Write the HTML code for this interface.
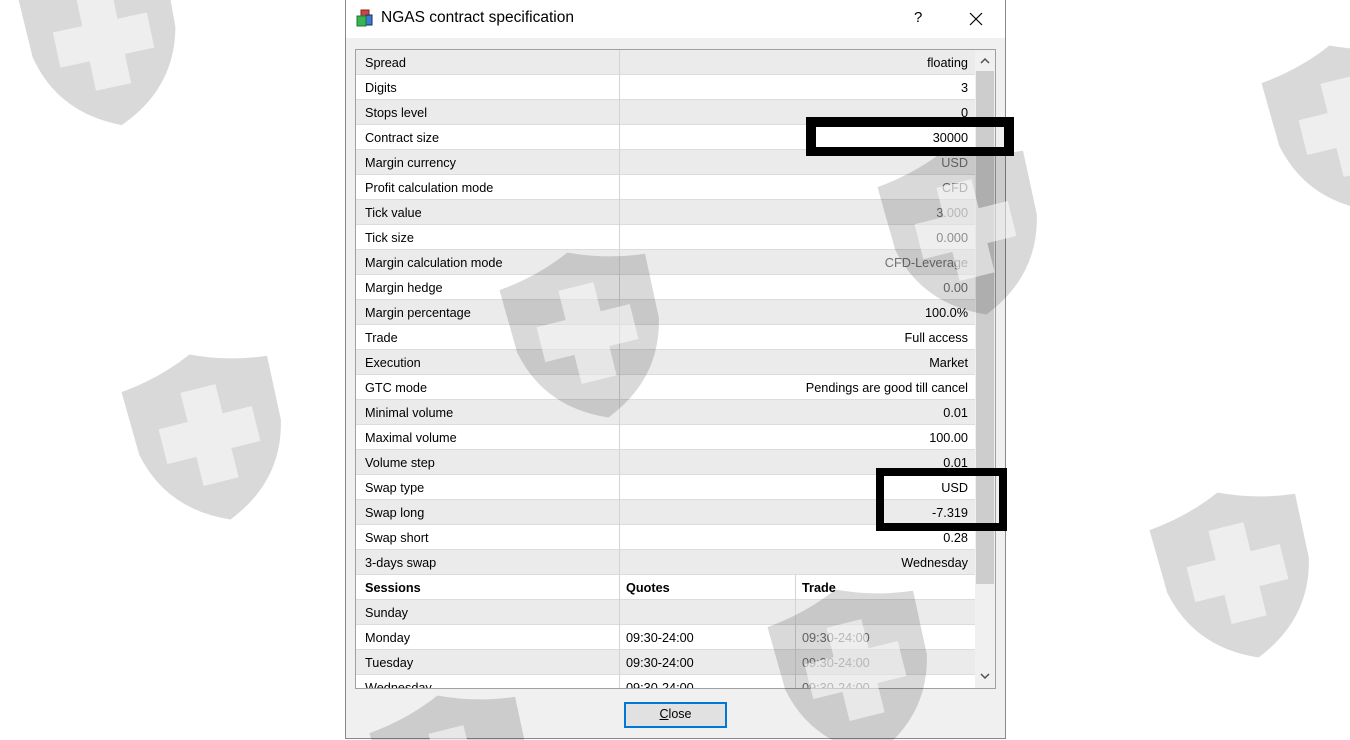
<!DOCTYPE html>
<html><head><meta charset="utf-8">
<style>
*{margin:0;padding:0;box-sizing:border-box}
html,body{width:1350px;height:740px;overflow:hidden}
body{background:#fff;position:relative;font-family:"Liberation Sans","DejaVu Sans",sans-serif;font-size:12.7px;color:#000}
#dlg{position:absolute;left:345px;top:0;width:661px;height:739px;background:#f0f0f0;border:1px solid #8a8a8a;border-top:none}
#title{position:absolute;left:0;top:0;width:659px;height:38px;background:#fff}
#title .t{position:absolute;left:35px;top:9px;font-size:15.5px;color:#000}
#title .q{position:absolute;left:568px;top:9px;font-size:15px}
#tbl{position:absolute;left:9px;top:49px;width:641px;height:640px;border:1px solid #a0a0a0;background:#fff;overflow:hidden}
.r{position:absolute;left:0;width:619px;height:25px;border-bottom:1px solid #dcdcdc}
.r.g{background:#ebebeb}
.r .l{position:absolute;left:9px;top:6px}
.r .v{position:absolute;right:7px;top:6px;text-align:right}
.r .c1{position:absolute;left:263px;top:0;width:1px;height:25px;background:#d4d4d4}
.r .c2{position:absolute;left:439px;top:0;width:1px;height:25px;background:#d4d4d4}
.gr{color:#707070}
.b{font-weight:bold}
#sb{position:absolute;left:619px;top:0;width:20px;height:638px;background:#f0f0f0}
#thumb{position:absolute;left:1px;top:21px;width:18px;height:513px;background:#cdcdcd}
.box{position:absolute;border:solid #000}
#btn{position:absolute;left:278px;top:702px;width:103px;height:26px;border:2px solid #0078d7;background:#e1e1e1;text-align:center;line-height:21px;font-size:12.5px}
#wm{position:absolute;left:0;top:0;display:block}
</style></head><body>
<div id="dlg">
 <div id="title">
  <svg style="position:absolute;left:10px;top:9px" width="18" height="18" viewBox="0 0 18 18">
   <rect x="5" y="1" width="8" height="6" fill="#c44" stroke="#822" stroke-width="1"/>
   <rect x="10" y="6" width="6" height="10" fill="#3a7bd5" stroke="#135" stroke-width="1"/>
   <rect x="1" y="7" width="9" height="10" fill="#3cb44b" stroke="#174" stroke-width="1"/>
  </svg>
  <div class="t">NGAS contract specification</div>
  <div class="q">?</div>
  <svg style="position:absolute;left:623px;top:12px" width="14" height="14" viewBox="0 0 14 14"><path d="M1 1L13 13M13 1L1 13" stroke="#000" stroke-width="1.2"/></svg>
 </div>
 <div id="tbl">
  <div class="r g" style="top:0"><span class="l">Spread</span><span class="c1"></span><span class="v">floating</span></div>
  <div class="r" style="top:25px"><span class="l">Digits</span><span class="c1"></span><span class="v">3</span></div>
  <div class="r g" style="top:50px"><span class="l">Stops level</span><span class="c1"></span><span class="v">0</span></div>
  <div class="r" style="top:75px"><span class="l">Contract size</span><span class="c1"></span><span class="v">30000</span></div>
  <div class="r g" style="top:100px"><span class="l">Margin currency</span><span class="c1"></span><span class="v gr">USD</span></div>
  <div class="r" style="top:125px"><span class="l">Profit calculation mode</span><span class="c1"></span><span class="v gr">CFD</span></div>
  <div class="r g" style="top:150px"><span class="l">Tick value</span><span class="c1"></span><span class="v gr">3.000</span></div>
  <div class="r" style="top:175px"><span class="l">Tick size</span><span class="c1"></span><span class="v">0.000</span></div>
  <div class="r g" style="top:200px"><span class="l">Margin calculation mode</span><span class="c1"></span><span class="v gr">CFD-Leverage</span></div>
  <div class="r" style="top:225px"><span class="l">Margin hedge</span><span class="c1"></span><span class="v gr">0.00</span></div>
  <div class="r g" style="top:250px"><span class="l">Margin percentage</span><span class="c1"></span><span class="v">100.0%</span></div>
  <div class="r" style="top:275px"><span class="l">Trade</span><span class="c1"></span><span class="v">Full access</span></div>
  <div class="r g" style="top:300px"><span class="l">Execution</span><span class="c1"></span><span class="v">Market</span></div>
  <div class="r" style="top:325px"><span class="l">GTC mode</span><span class="c1"></span><span class="v">Pendings are good till cancel</span></div>
  <div class="r g" style="top:350px"><span class="l">Minimal volume</span><span class="c1"></span><span class="v">0.01</span></div>
  <div class="r" style="top:375px"><span class="l">Maximal volume</span><span class="c1"></span><span class="v">100.00</span></div>
  <div class="r g" style="top:400px"><span class="l">Volume step</span><span class="c1"></span><span class="v">0.01</span></div>
  <div class="r" style="top:425px"><span class="l">Swap type</span><span class="c1"></span><span class="v">USD</span></div>
  <div class="r g" style="top:450px"><span class="l">Swap long</span><span class="c1"></span><span class="v">-7.319</span></div>
  <div class="r" style="top:475px"><span class="l">Swap short</span><span class="c1"></span><span class="v">0.28</span></div>
  <div class="r g" style="top:500px"><span class="l">3-days swap</span><span class="c1"></span><span class="v">Wednesday</span></div>
  <div class="r" style="top:525px"><span class="l b">Sessions</span><span class="c1"></span><span class="l b" style="left:270px">Quotes</span><span class="c2"></span><span class="l b" style="left:446px">Trade</span></div>
  <div class="r g" style="top:550px"><span class="l">Sunday</span><span class="c1"></span><span class="c2"></span></div>
  <div class="r" style="top:575px"><span class="l">Monday</span><span class="c1"></span><span class="l" style="left:270px">09:30-24:00</span><span class="c2"></span><span class="l gr" style="left:446px">09:30-24:00</span></div>
  <div class="r g" style="top:600px"><span class="l">Tuesday</span><span class="c1"></span><span class="l" style="left:270px">09:30-24:00</span><span class="c2"></span><span class="l gr" style="left:446px">09:30-24:00</span></div>
  <div class="r" style="top:625px"><span class="l">Wednesday</span><span class="c1"></span><span class="l" style="left:270px">09:30-24:00</span><span class="c2"></span><span class="l gr" style="left:446px">09:30-24:00</span></div>
  <div id="sb"><div id="thumb"></div>
   <svg style="position:absolute;left:5px;top:7px" width="10" height="7" viewBox="0 0 10 7"><path d="M1 6L5 2L9 6" fill="none" stroke="#505050" stroke-width="1.5"/></svg>
   <svg style="position:absolute;left:5px;top:623px" width="10" height="7" viewBox="0 0 10 7"><path d="M1 1L5 5L9 1" fill="none" stroke="#505050" stroke-width="1.5"/></svg>
  </div>
 </div>
 <div id="btn"><u>C</u>lose</div>
</div>
<div class="box" style="left:806px;top:117px;width:208px;height:39px;border-width:10px 10px 9px 10px"></div>
<div class="box" style="left:876px;top:468px;width:131px;height:63px;border-width:8px"></div>
<svg id="wm" width="1350" height="740" viewBox="0 0 1350 740">
 <defs>
  <g id="sh">
   <path d="M0,20 Q40,16 75,0 Q110,16 150,20 L148,85 Q135,145 75,170 Q15,145 2,85 Z" fill="rgba(0,0,0,0.15)"/>
   <path d="M57,35h36v30h30v36h-30v30h-36v-30h-30v-36h30z" fill="rgba(255,255,255,0.55)"/>
  </g>
 </defs>
 <use href="#sh" transform="translate(104,42) rotate(-12) translate(-75,-85)"/>
 <use href="#sh" transform="translate(210,437) rotate(-14) translate(-75,-85)"/>
 <use href="#sh" transform="translate(1350,128) rotate(-14) translate(-75,-85)"/>
 <use href="#sh" transform="translate(1238,575) rotate(-14) translate(-75,-85)"/>
 <use href="#sh" transform="translate(588,335) rotate(-14) translate(-75,-85)"/>
 <use href="#sh" transform="translate(966,232) rotate(-14) translate(-75,-85)"/>
 <use href="#sh" transform="translate(856,672) rotate(-14) translate(-75,-85)"/>
 <use href="#sh" transform="translate(458,778) rotate(-14) translate(-75,-85)"/>
</svg>
</body></html>
